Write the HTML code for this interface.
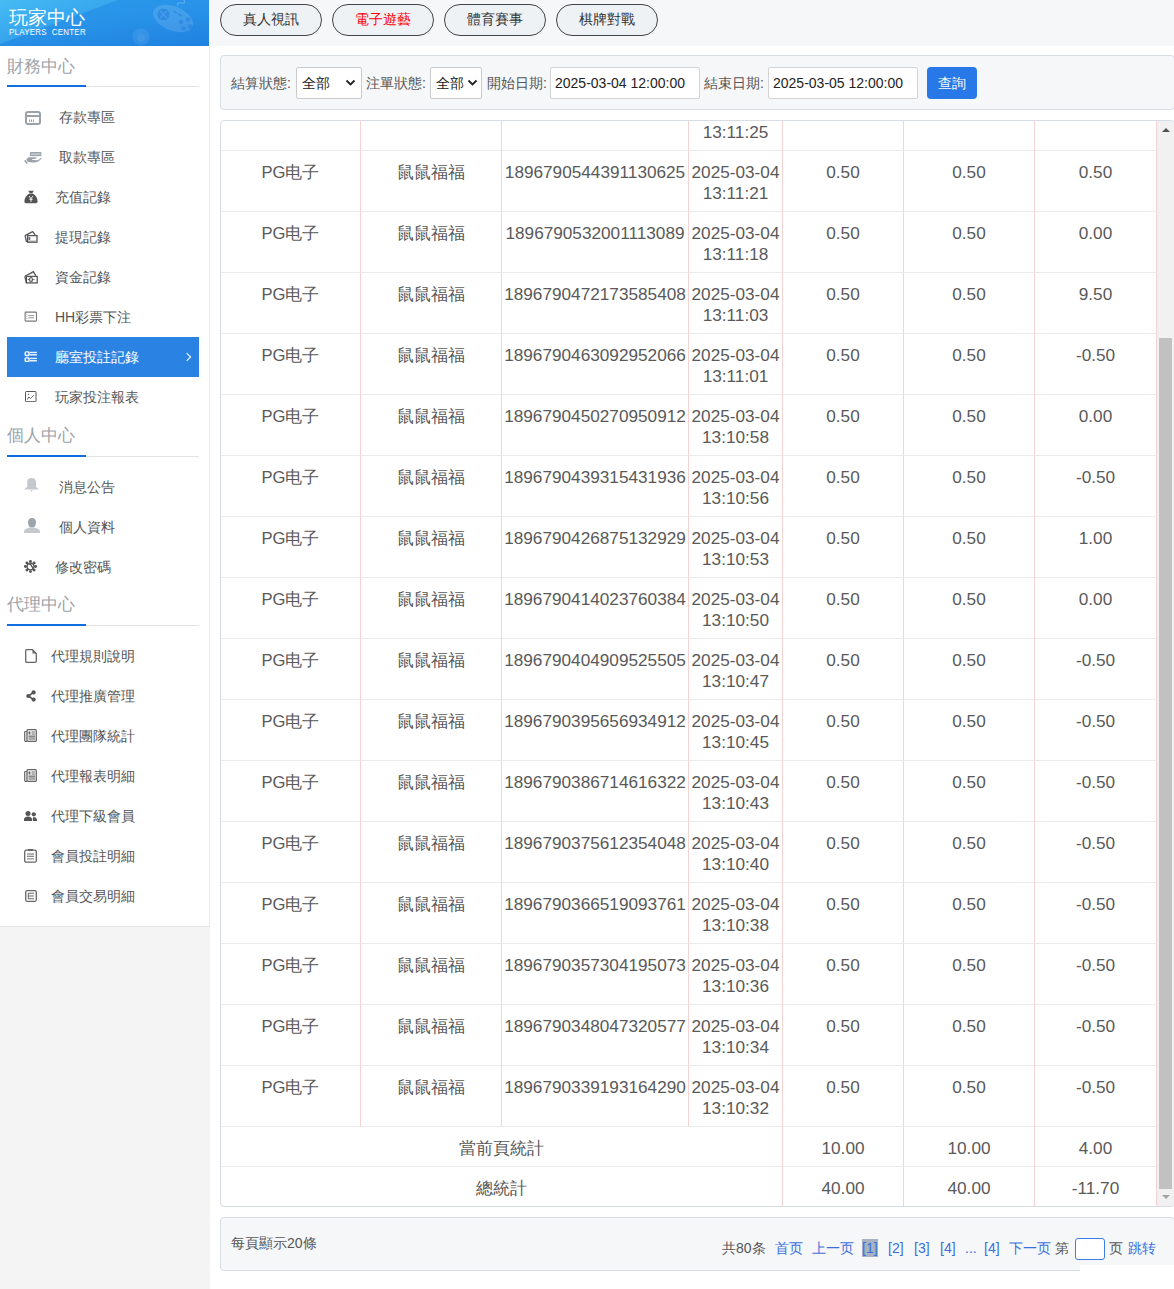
<!DOCTYPE html>
<html><head><meta charset="utf-8">
<style>
*{box-sizing:border-box;margin:0;padding:0}
html,body{width:1174px;height:1289px;overflow:hidden;background:#fff;font-family:"Liberation Sans",sans-serif;color:#555}
.abs{position:absolute}
#logo{left:0;top:0;width:209px;height:46px;background:linear-gradient(172deg,#2c9aec 0%,#2893e8 45%,#1f81e1 100%);overflow:hidden}
#topbar{left:209px;top:0;width:965px;height:46px;background:#f6f7f9}
#side{left:0;top:46px;width:210px;height:881px;background:#fff;border-right:1px solid #e6e9ee;border-bottom:1px solid #e4e4e4}
#sidegray{left:0;top:927px;width:210px;height:362px;background:#f4f4f4}
.tb{position:absolute;top:4px;width:102px;height:32px;border:1px solid #444;border-radius:16px;background:#eff2f5;font-size:14px;line-height:28px;text-align:center;color:#333}
#search{left:220px;top:55px;width:955px;height:55px;background:#f6f7f9;border:1px solid #d8dde3;border-radius:4px}
.lbl{position:absolute;top:19px;font-size:14px;line-height:16px;color:#555}
.sel{position:absolute;top:11px;height:32px;background:#fff;border:1px solid #cbcbcb;border-radius:2px;font-size:14px;color:#222;line-height:30px;padding-left:5px}
.inp{position:absolute;top:11px;height:32px;width:150px;background:#fff;border:1px solid #d4d4d4;border-radius:2px;font-size:14px;color:#222;line-height:30px;padding-left:4px}
#qbtn{position:absolute;left:706px;top:11px;width:50px;height:32px;background:#2878e8;border-radius:4px;color:#fff;font-size:14px;line-height:32px;text-align:center}
#tbl{left:220px;top:120px;width:955px;height:1087px;border:1px solid #d8dde3;border-radius:4px;overflow:hidden;background:#fff}

#dt{position:absolute;left:0;top:-31px;width:936px;border-collapse:separate;border-spacing:0;table-layout:fixed;font-size:16.6px;color:#595959}
#dt td{border-right:1px solid #f5d3d3;border-bottom:1px solid #ebebeb;text-align:center;vertical-align:top;padding:11px 0 0 0;line-height:21px;white-space:nowrap;overflow:hidden}
#dt tr.r td{height:61px}
#dt tr.s td{height:40px;padding-top:11px}
#dt td.n{font-size:17.2px}
#sb{position:absolute;left:936px;top:0;width:17px;height:1085px;background:#f1f1f1}
#sb .th{position:absolute;left:2px;top:217px;width:13px;height:851px;background:#c1c1c1}
#sb .up{position:absolute;left:5px;top:7px;width:0;height:0;border-left:4px solid transparent;border-right:4px solid transparent;border-bottom:4px solid #505050}
#sb .dn{position:absolute;left:5px;top:1074px;width:0;height:0;border-left:4px solid transparent;border-right:4px solid transparent;border-top:4px solid #a3a3a3}

.st{position:absolute;left:7px;width:192px;border-bottom:1px solid #e3e3e3;font-size:17px;color:#9ca3aa;padding-top:9px;line-height:24px}
.st i{position:absolute;left:0;bottom:-1px;width:79px;height:2px;background:#0f6fe0}
.it{position:absolute;height:40px;line-height:40px;font-size:14px;color:#555;white-space:nowrap}
.it.on{color:#fff}
.ic{position:absolute;line-height:0}
.ic svg{display:block}
.act{position:absolute;left:7px;width:192px;height:40px;background:#2a83e3}
.chev{position:absolute;left:184px;width:6px;height:6px;border-right:1.5px solid #fff;border-top:1.5px solid #fff;transform:rotate(45deg);margin-top:2px}

#pag{left:220px;top:1217px;width:955px;height:54px;background:#f6f7f9;border:1px solid #d8dde3;border-radius:4px}
.pg{position:absolute;top:21px;font-size:14px;line-height:18px;color:#3a6fe0;white-space:nowrap}
.pg.cur{background:#a9b1c2;color:#3a6fe0}
</style></head><body>
<div id="logo" class="abs">
<svg style="position:absolute;left:0;top:0" width="209" height="46"><defs><linearGradient id="lg1" x1="0" y1="0" x2="1" y2="1"><stop offset="0" stop-color="rgba(90,215,250,0.55)"/><stop offset="1" stop-color="rgba(80,190,245,0.12)"/></linearGradient></defs><polygon points="0,0 118,0 0,44" fill="url(#lg1)"/></svg>
<svg style="position:absolute;left:0;top:0" width="209" height="46" viewBox="0 0 209 46"><ellipse cx="173" cy="18.5" rx="21" ry="12" transform="rotate(22 173 18.5)" fill="rgba(255,255,255,0.13)"/><path d="M178 6 Q176 2 181 3 Q186 4 184 0" stroke="rgba(255,255,255,0.2)" fill="none" stroke-width="1.3"/><circle cx="163.5" cy="14.5" r="6" fill="rgba(25,115,225,0.45)"/><path d="M160 11 L167 18 M167 11 L160 18" stroke="rgba(255,255,255,0.12)" stroke-width="1.5"/><g fill="rgba(25,115,225,0.4)"><circle cx="181" cy="22" r="2.3"/><circle cx="188" cy="19.5" r="2.3"/><circle cx="183.5" cy="28.3" r="2.3"/><circle cx="190" cy="26.5" r="2.3"/></g><path d="M173 11 L177 13 M178 14 L182 16" stroke="rgba(25,115,225,0.45)" stroke-width="1.5"/><circle cx="141" cy="37" r="8.5" fill="rgba(255,255,255,0.08)"/><circle cx="141" cy="38" r="4" fill="rgba(255,255,255,0.06)"/></svg>
<div style="position:absolute;left:9px;top:6px;font-size:19px;line-height:24px;color:#fff;letter-spacing:0px">玩家中心</div>
<div style="position:absolute;left:9px;top:27px;font-size:9px;line-height:10px;color:#fff;letter-spacing:0.3px;transform:scaleX(0.88);transform-origin:left">PLAYERS&nbsp; CENTER</div>
</div>
<div id="topbar" class="abs">
  <div class="tb" style="left:11px">真人視訊</div>
  <div class="tb" style="left:123px;color:#f00">電子遊藝</div>
  <div class="tb" style="left:235px">體育賽事</div>
  <div class="tb" style="left:347px">棋牌對戰</div>
</div>
<div id="side" class="abs"></div>
<div id="sidegray" class="abs"></div>
<!--SIDE-->
<div class="st" style="top:46px;height:41px">財務中心<i></i></div>
<div class="st" style="top:417px;height:40px;padding-top:7px">個人中心<i></i></div>
<div class="st" style="top:586px;height:40px;padding-top:7px">代理中心<i></i></div>
<div class="ic" style="left:25px;top:111px"><svg width="16" height="14" viewBox="0 0 16 14"><rect x="1" y="1" width="14" height="12" rx="2" fill="none" stroke="#9aa2a9" stroke-width="2"/><rect x="1" y="4" width="14" height="2" fill="#9aa2a9"/><rect x="4" y="8.5" width="1" height="2.5" fill="#9aa2a9"/><rect x="6" y="8.5" width="1" height="2.5" fill="#9aa2a9"/><rect x="8" y="8.5" width="1" height="2.5" fill="#9aa2a9"/></svg></div>
<div class="it" style="left:59px;top:97px">存款專區</div>
<div class="ic" style="left:24px;top:152px"><svg width="18" height="13" viewBox="0 0 18 13"><rect x="6.5" y="0.6" width="10.3" height="3" fill="#bcc3c9" stroke="#9aa3ab" stroke-width="1.1"/><path d="M2.2 7.4 L4.4 5.2 L12.7 5.2 L11.9 6.8 L8.2 6.9 Q7.8 7.9 9 8.1 L13.8 8.3 L17.6 5.4 Q18 6.3 17.2 7 L14.3 9.6 Q12 10.7 9.5 10.5 L5.2 10.3 L3.6 9.8 Z" fill="#9aa3ab"/><path d="M0.8 8.2 L3.2 11.6" stroke="#9aa3ab" stroke-width="1.6"/></svg></div>
<div class="it" style="left:59px;top:137px">取款專區</div>
<div class="ic" style="left:24px;top:190px"><svg width="14" height="14" viewBox="0 0 14 14"><path d="M4.2 0.8 L9.8 0.8 L8.4 3 L5.6 3 Z" fill="#555"/><path d="M5.4 3.6 L8.6 3.6 Q13.6 6.5 13.6 11.5 Q13.6 13.2 12 13.2 L2 13.2 Q0.4 13.2 0.4 11.5 Q0.4 6.5 5.4 3.6 Z" fill="#555"/><path d="M5.2 6.2 L7 8.6 L8.8 6.2 M7 8.6 L7 11.8 M5.4 9.3 H8.6" stroke="#fff" stroke-width="0.95" fill="none"/></svg></div>
<div class="it" style="left:55px;top:177px">充值記錄</div>
<div class="ic" style="left:24px;top:231px"><svg width="14" height="12" viewBox="0 0 14 12"><path d="M1 4.6 L8.6 0.6 L11.2 3.8 M1 4.6 L2.6 11" fill="none" stroke="#555" stroke-width="1.3"/><rect x="3.6" y="4.6" width="9.4" height="6.6" fill="#fff" stroke="#555" stroke-width="1.3"/><rect x="4.5" y="6.2" width="1.8" height="2.6" fill="#557"/><rect x="4.2" y="9.6" width="8.2" height="1.4" fill="#999"/></svg></div>
<div class="it" style="left:55px;top:217px">提現記錄</div>
<div class="ic" style="left:24px;top:271px"><svg width="14" height="13" viewBox="0 0 14 13"><path d="M0.8 5.3 L9.4 0.6 L11.8 4.6 M0.8 5.3 L2.4 11.8" fill="none" stroke="#555" stroke-width="1.3"/><path d="M3.5 3.8 L8.8 1.8" stroke="#777" stroke-width="0.9"/><rect x="2.4" y="5.4" width="10.8" height="6.5" fill="#fff" stroke="#555" stroke-width="1.3"/><ellipse cx="7" cy="8.6" rx="1.5" ry="1.9" fill="none" stroke="#555" stroke-width="1.2"/><rect x="3.8" y="8.1" width="1.3" height="1" fill="#555"/><rect x="9.2" y="8.1" width="1.3" height="1" fill="#555"/></svg></div>
<div class="it" style="left:55px;top:257px">資金記錄</div>
<div class="ic" style="left:24px;top:311px"><svg width="14" height="11" viewBox="0 0 14 11"><rect x="1.1" y="1.1" width="11.4" height="9" rx="0.8" fill="none" stroke="#777" stroke-width="1.1"/><path d="M4.3 4.6 H10.2 M4.3 6.8 H10.2" stroke="#888" stroke-width="0.9"/><path d="M2.9 3 V9" stroke="#999" stroke-width="0.9" stroke-dasharray="1 1"/></svg></div>
<div class="it" style="left:55px;top:297px">HH彩票下注</div>
<div class="act" style="top:337px"></div><div class="chev" style="top:352px"></div>
<div class="ic" style="left:24px;top:351px"><svg width="14" height="11" viewBox="0 0 14 11"><rect x="1.2" y="0.9" width="3.8" height="3.6" rx="0.9" fill="none" stroke="#fff" stroke-width="1.4"/><rect x="1.2" y="6.9" width="3.8" height="3.6" rx="0.9" fill="none" stroke="#fff" stroke-width="1.4"/><rect x="5.6" y="0.8" width="7.3" height="1.1" fill="#fff"/><rect x="5.6" y="2.9" width="7.3" height="1.6" fill="#eaf1fc"/><rect x="5.6" y="6.8" width="7.3" height="1.1" fill="#fff"/><rect x="5.6" y="8.9" width="7.3" height="1.6" fill="#eaf1fc"/></svg></div>
<div class="it on" style="left:55px;top:337px">廳室投註記錄</div>
<div class="ic" style="left:25px;top:391px"><svg width="12" height="11" viewBox="0 0 12 11"><rect x="0.5" y="0.5" width="10.5" height="10.2" rx="0.8" fill="none" stroke="#555" stroke-width="1"/><path d="M2.3 8.6 L3.8 6 L5.5 7.6 L8.9 4.2" fill="none" stroke="#666" stroke-width="1"/><circle cx="3.4" cy="3.2" r="0.8" fill="#777"/></svg></div>
<div class="it" style="left:55px;top:377px">玩家投注報表</div>
<div class="ic" style="left:24px;top:478px"><svg width="16" height="15" viewBox="0 0 16 15"><path d="M7.6 0 Q12 0 12 3.8 L12 8.8 L15 11.6 L0 11.6 L3.2 8.8 L3.2 3.8 Q3.2 0 7.6 0 Z" fill="#c3c9cf"/><path d="M6.2 12.6 L9 12.6 L7.6 13.8 Z" fill="#aab2b9"/></svg></div>
<div class="it" style="left:59px;top:467px">消息公告</div>
<div class="ic" style="left:24px;top:518px"><svg width="16" height="15" viewBox="0 0 16 15"><path d="M8 0 Q12 0 12 4.5 Q12 8 9.5 9.5 L6.5 9.5 Q4 8 4 4.5 Q4 0 8 0 Z" fill="#9ba5ae"/><path d="M0 15 L0 13 Q0.5 11 4 10 L6 9.5 L10 9.5 L12 10 Q15.5 11 16 13 L16 15 Z" fill="#c3c9cf"/></svg></div>
<div class="it" style="left:59px;top:507px">個人資料</div>
<div class="ic" style="left:24px;top:560px"><svg width="13" height="13" viewBox="0 0 13 13" style="overflow:visible"><g fill="#555"><circle cx="11.60" cy="6.50" r="1.45"/><circle cx="10.11" cy="10.11" r="1.45"/><circle cx="6.50" cy="11.60" r="1.45"/><circle cx="2.89" cy="10.11" r="1.45"/><circle cx="1.40" cy="6.50" r="1.45"/><circle cx="2.89" cy="2.89" r="1.45"/><circle cx="6.50" cy="1.40" r="1.45"/><circle cx="10.11" cy="2.89" r="1.45"/></g><circle cx="6.5" cy="6.5" r="3.4" fill="#fff" stroke="#555" stroke-width="1.3"/><path d="M5.2 4.6 Q6.8 3.6 7.3 5.6 L9.8 9.6" fill="none" stroke="#555" stroke-width="1.3"/></svg></div>
<div class="it" style="left:55px;top:547px">修改密碼</div>
<div class="ic" style="left:25px;top:649px"><svg width="12" height="14" viewBox="0 0 12 14"><path d="M1.5 0.7 L7.5 0.7 L11.3 4.5 L11.3 12 Q11.3 13.3 10 13.3 L2 13.3 Q0.7 13.3 0.7 12 L0.7 2 Q0.7 0.7 2 0.7 Z" fill="none" stroke="#666" stroke-width="1.3"/><path d="M7.5 0.7 L7.5 4.5 L11.3 4.5" fill="#666"/></svg></div>
<div class="it" style="left:51px;top:636px">代理規則說明</div>
<div class="ic" style="left:26px;top:690px"><svg width="10" height="12" viewBox="0 0 10 12"><path d="M7.5 2.3 L2.5 6 L7.5 9.7" fill="none" stroke="#555" stroke-width="1.6"/><circle cx="7.6" cy="2.4" r="2.1" fill="#555"/><circle cx="2.3" cy="6" r="2.1" fill="#555"/><circle cx="7.6" cy="9.6" r="2.1" fill="#555"/></svg></div>
<div class="it" style="left:51px;top:676px">代理推廣管理</div>
<div class="ic" style="left:24px;top:729px"><svg width="13" height="13" viewBox="0 0 13 13"><rect x="3" y="0.7" width="9.3" height="11.6" rx="1" fill="none" stroke="#666" stroke-width="1.3"/><path d="M3 2.5 L1.3 2.5 Q0.7 2.5 0.7 3.2 L0.7 11.5 Q0.7 12.3 1.5 12.3 L3 12.3" fill="none" stroke="#666" stroke-width="1.2"/><rect x="4.5" y="2.5" width="2" height="3" fill="#666"/><path d="M7.5 3 H11 M7.5 5 H11" stroke="#666" stroke-width="1"/><rect x="4.5" y="7" width="6.5" height="4.3" fill="#aaa"/><path d="M4.5 7 H11" stroke="#666" stroke-width="1"/></svg></div>
<div class="it" style="left:51px;top:716px">代理團隊統計</div>
<div class="ic" style="left:24px;top:769px"><svg width="13" height="13" viewBox="0 0 13 13"><rect x="3" y="0.7" width="9.3" height="11.6" rx="1" fill="none" stroke="#666" stroke-width="1.3"/><path d="M3 2.5 L1.3 2.5 Q0.7 2.5 0.7 3.2 L0.7 11.5 Q0.7 12.3 1.5 12.3 L3 12.3" fill="none" stroke="#666" stroke-width="1.2"/><rect x="4.5" y="2.5" width="2" height="3" fill="#666"/><path d="M7.5 3 H11 M7.5 5 H11" stroke="#666" stroke-width="1"/><rect x="4.5" y="7" width="6.5" height="4.3" fill="#aaa"/><path d="M4.5 7 H11" stroke="#666" stroke-width="1"/></svg></div>
<div class="it" style="left:51px;top:756px">代理報表明細</div>
<div class="ic" style="left:24px;top:811px"><svg width="13" height="10" viewBox="0 0 13 10"><circle cx="4" cy="2.5" r="2.5" fill="#555"/><path d="M0 10 L0 8 Q0.5 5.5 4 5.5 Q7.5 5.5 8 8 L8 10 Z" fill="#555"/><circle cx="9.8" cy="3.3" r="2.1" fill="#555"/><path d="M8.8 10 L8.8 7.5 Q8.8 6 9.8 6 Q12.5 6 13 8.5 L13 10 Z" fill="#555"/></svg></div>
<div class="it" style="left:51px;top:796px">代理下級會員</div>
<div class="ic" style="left:24px;top:849px"><svg width="13" height="14" viewBox="0 0 13 14"><rect x="0.7" y="1.2" width="11.6" height="12" rx="1.5" fill="none" stroke="#666" stroke-width="1.3"/><rect x="4" y="0" width="5" height="2" fill="#666"/><path d="M3 5 H10 M3 7.3 H10" stroke="#666" stroke-width="1.1"/><rect x="3" y="9" width="7" height="1.6" fill="#aaa"/></svg></div>
<div class="it" style="left:51px;top:836px">會員投註明細</div>
<div class="ic" style="left:25px;top:890px"><svg width="12" height="12" viewBox="0 0 12 12"><rect x="0.7" y="0.7" width="10.6" height="10.6" rx="1.5" fill="none" stroke="#666" stroke-width="1.3"/><path d="M3.3 3.3 H9 M3.3 6 H9 M3.3 8.7 H9" stroke="#666" stroke-width="1.1"/><path d="M3.3 3 V9" stroke="#666" stroke-width="1"/></svg></div>
<div class="it" style="left:51px;top:876px">會員交易明細</div>
<!--/SIDE-->
<div id="search" class="abs">
  <div class="lbl" style="left:10px">結算狀態:</div>
  <div class="sel" style="left:75px;width:66px">全部<svg style="position:absolute;right:5px;top:11px" width="11" height="8" viewBox="0 0 11 8"><path d="M1.5 1.5 L5.5 5.5 L9.5 1.5" fill="none" stroke="#222" stroke-width="1.8"/></svg></div>
  <div class="lbl" style="left:145px">注單狀態:</div>
  <div class="sel" style="left:209px;width:52px">全部<svg style="position:absolute;right:3px;top:11px" width="11" height="8" viewBox="0 0 11 8"><path d="M1.5 1.5 L5.5 5.5 L9.5 1.5" fill="none" stroke="#222" stroke-width="1.8"/></svg></div>
  <div class="lbl" style="left:266px">開始日期:</div>
  <div class="inp" style="left:329px">2025-03-04 12:00:00</div>
  <div class="lbl" style="left:483px">結束日期:</div>
  <div class="inp" style="left:547px">2025-03-05 12:00:00</div>
  <div id="qbtn">查詢</div>
</div>
<div id="pag" class="abs">
<div style="position:absolute;left:10px;top:16px;font-size:14px;line-height:18px;color:#555">每頁顯示20條</div>
<div class="pg" style="left:501px;color:#555">共80条</div>
<div class="pg" style="left:554px">首页</div>
<div class="pg" style="left:591px">上一页</div>
<div class="pg cur" style="left:641px">[1]</div>
<div class="pg" style="left:667px">[2]</div>
<div class="pg" style="left:693px">[3]</div>
<div class="pg" style="left:719px">[4]</div>
<div class="pg" style="left:744px">...</div>
<div class="pg" style="left:763px">[4]</div>
<div class="pg" style="left:788px">下一页</div>
<div class="pg" style="left:834px;color:#555">第</div>
<div style="position:absolute;left:854px;top:20px;width:30px;height:22px;border:1px solid #3b7de9;border-radius:3px;background:#fff"></div>
<div class="pg" style="left:888px;color:#555">页</div>
<div class="pg" style="left:907px">跳转</div>
</div>
<div class="abs" style="left:1080px;top:1265px;width:94px;height:24px;background:#fff"></div>
<div id="tbl" class="abs">
<table id="dt"><colgroup><col style="width:140px"><col style="width:141px"><col style="width:187px"><col style="width:94px"><col style="width:121px"><col style="width:131px"><col style="width:122px"></colgroup><tbody>
<tr class="r"><td>PG电子</td><td>鼠鼠福福</td><td class="n">1896790553000000000</td><td class="n">2025-03-04<br>13:11:25</td><td class="n">0.50</td><td class="n">0.50</td><td class="n">0.50</td></tr>
<tr class="r"><td>PG电子</td><td>鼠鼠福福</td><td class="n">1896790544391130625</td><td class="n">2025-03-04<br>13:11:21</td><td class="n">0.50</td><td class="n">0.50</td><td class="n">0.50</td></tr>
<tr class="r"><td>PG电子</td><td>鼠鼠福福</td><td class="n">1896790532001113089</td><td class="n">2025-03-04<br>13:11:18</td><td class="n">0.50</td><td class="n">0.50</td><td class="n">0.00</td></tr>
<tr class="r"><td>PG电子</td><td>鼠鼠福福</td><td class="n">1896790472173585408</td><td class="n">2025-03-04<br>13:11:03</td><td class="n">0.50</td><td class="n">0.50</td><td class="n">9.50</td></tr>
<tr class="r"><td>PG电子</td><td>鼠鼠福福</td><td class="n">1896790463092952066</td><td class="n">2025-03-04<br>13:11:01</td><td class="n">0.50</td><td class="n">0.50</td><td class="n">-0.50</td></tr>
<tr class="r"><td>PG电子</td><td>鼠鼠福福</td><td class="n">1896790450270950912</td><td class="n">2025-03-04<br>13:10:58</td><td class="n">0.50</td><td class="n">0.50</td><td class="n">0.00</td></tr>
<tr class="r"><td>PG电子</td><td>鼠鼠福福</td><td class="n">1896790439315431936</td><td class="n">2025-03-04<br>13:10:56</td><td class="n">0.50</td><td class="n">0.50</td><td class="n">-0.50</td></tr>
<tr class="r"><td>PG电子</td><td>鼠鼠福福</td><td class="n">1896790426875132929</td><td class="n">2025-03-04<br>13:10:53</td><td class="n">0.50</td><td class="n">0.50</td><td class="n">1.00</td></tr>
<tr class="r"><td>PG电子</td><td>鼠鼠福福</td><td class="n">1896790414023760384</td><td class="n">2025-03-04<br>13:10:50</td><td class="n">0.50</td><td class="n">0.50</td><td class="n">0.00</td></tr>
<tr class="r"><td>PG电子</td><td>鼠鼠福福</td><td class="n">1896790404909525505</td><td class="n">2025-03-04<br>13:10:47</td><td class="n">0.50</td><td class="n">0.50</td><td class="n">-0.50</td></tr>
<tr class="r"><td>PG电子</td><td>鼠鼠福福</td><td class="n">1896790395656934912</td><td class="n">2025-03-04<br>13:10:45</td><td class="n">0.50</td><td class="n">0.50</td><td class="n">-0.50</td></tr>
<tr class="r"><td>PG电子</td><td>鼠鼠福福</td><td class="n">1896790386714616322</td><td class="n">2025-03-04<br>13:10:43</td><td class="n">0.50</td><td class="n">0.50</td><td class="n">-0.50</td></tr>
<tr class="r"><td>PG电子</td><td>鼠鼠福福</td><td class="n">1896790375612354048</td><td class="n">2025-03-04<br>13:10:40</td><td class="n">0.50</td><td class="n">0.50</td><td class="n">-0.50</td></tr>
<tr class="r"><td>PG电子</td><td>鼠鼠福福</td><td class="n">1896790366519093761</td><td class="n">2025-03-04<br>13:10:38</td><td class="n">0.50</td><td class="n">0.50</td><td class="n">-0.50</td></tr>
<tr class="r"><td>PG电子</td><td>鼠鼠福福</td><td class="n">1896790357304195073</td><td class="n">2025-03-04<br>13:10:36</td><td class="n">0.50</td><td class="n">0.50</td><td class="n">-0.50</td></tr>
<tr class="r"><td>PG电子</td><td>鼠鼠福福</td><td class="n">1896790348047320577</td><td class="n">2025-03-04<br>13:10:34</td><td class="n">0.50</td><td class="n">0.50</td><td class="n">-0.50</td></tr>
<tr class="r"><td>PG电子</td><td>鼠鼠福福</td><td class="n">1896790339193164290</td><td class="n">2025-03-04<br>13:10:32</td><td class="n">0.50</td><td class="n">0.50</td><td class="n">-0.50</td></tr>
<tr class="s"><td colspan="4">當前頁統計</td><td class="n">10.00</td><td class="n">10.00</td><td class="n">4.00</td></tr>
<tr class="s"><td colspan="4">總統計</td><td class="n">40.00</td><td class="n">40.00</td><td class="n">-11.70</td></tr>
</tbody></table>
<div id="sb"><div class="up"></div><div class="th"></div><div class="dn"></div></div>
</div>
</body></html>
